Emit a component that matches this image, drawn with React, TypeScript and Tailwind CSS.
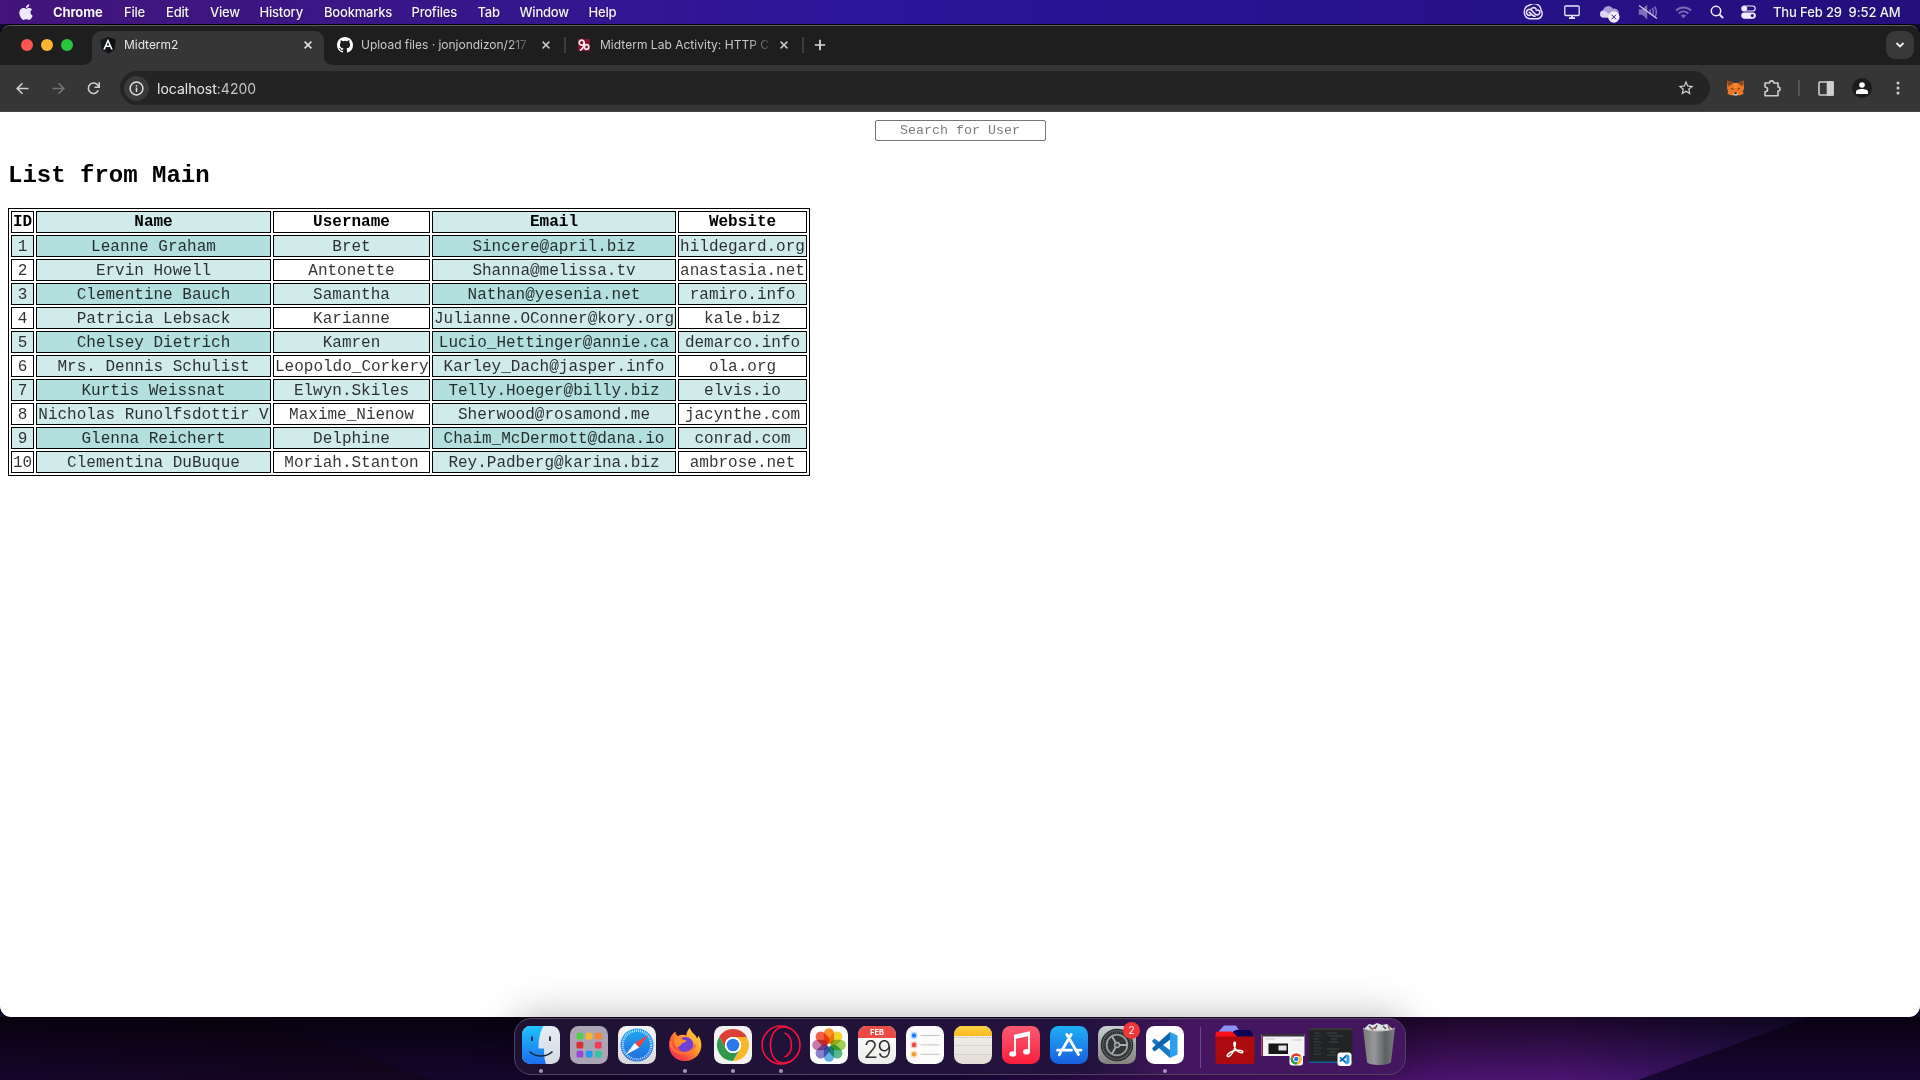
import React from "react";
import type { ReactNode } from "react";

const menus = [
  ["File", "w-[42px]"],
  ["Edit", "w-[44px]"],
  ["View", "w-[49.5px]"],
  ["History", "w-[64.5px]"],
  ["Bookmarks", "w-[87.5px]"],
  ["Profiles", "w-[66px]"],
  ["Tab", "w-[42px]"],
  ["Window", "w-[69px]"],
  ["Help", "w-[40px]"],
];

const users = [
  ["1", "Leanne Graham", "Bret", "Sincere@april.biz", "hildegard.org"],
  ["2", "Ervin Howell", "Antonette", "Shanna@melissa.tv", "anastasia.net"],
  ["3", "Clementine Bauch", "Samantha", "Nathan@yesenia.net", "ramiro.info"],
  ["4", "Patricia Lebsack", "Karianne", "Julianne.OConner@kory.org", "kale.biz"],
  ["5", "Chelsey Dietrich", "Kamren", "Lucio_Hettinger@annie.ca", "demarco.info"],
  ["6", "Mrs. Dennis Schulist", "Leopoldo_Corkery", "Karley_Dach@jasper.info", "ola.org"],
  ["7", "Kurtis Weissnat", "Elwyn.Skiles", "Telly.Hoeger@billy.biz", "elvis.io"],
  ["8", "Nicholas Runolfsdottir V", "Maxime_Nienow", "Sherwood@rosamond.me", "jacynthe.com"],
  ["9", "Glenna Reichert", "Delphine", "Chaim_McDermott@dana.io", "conrad.com"],
  ["10", "Clementina DuBuque", "Moriah.Stanton", "Rey.Padberg@karina.biz", "ambrose.net"],
];

/* ---------- menu bar ---------- */

function MenuBar() {
  return (
    <header className="flex h-6 items-center bg-linear-to-r from-[#43147a] via-[#2b159b] via-45% to-[#230f7c] text-[13px] leading-6 text-white/95 [text-shadow:0_1px_2px_rgba(0,0,0,0.35)]">
      <svg className="ml-[19px] mr-[20px] h-[17px] w-[14px] shrink-0 -translate-y-px" viewBox="0 0 384 480" fill="#eee8fa">
        <path d="M318.700 268.700c-.2-36.700 16.400-64.400 50-84.800-18.800-26.900-47.200-41.700-84.700-44.600-35.500-2.800-74.300 20.700-88.500 20.700-15 0-49.400-19.700-76.400-19.700C63.300 141.200 4 184.800 4 273.500q0 39.300 14.400 81.200c12.800 36.700 59 126.700 107.200 125.200 25.200-.6 43-17.900 75.800-17.900 31.800 0 48.300 17.900 76.400 17.900 48.600-.7 90.400-82.500 102.600-119.300-65.200-30.700-61.700-90-61.700-91.900zM262.100 104.500c27.300-32.400 24.800-61.900 24-72.500-24.100 1.400-52 16.400-67.900 34.900-17.500 19.800-27.800 44.300-25.600 71.900 26.100 2 49.900-11.400 69.500-34.300z" />
      </svg>
      <span className="mr-5 w-[51px] whitespace-nowrap font-bold tracking-[-0.12px]">Chrome</span>
      <nav className="flex font-medium tracking-[-0.2px]">
        {menus.map(([m, width]) => (
          <span key={m} className={width}>{m}</span>
        ))}
      </nav>
      <div className="ml-auto flex items-center">
        <svg className="h-4 w-5" viewBox="0 0 20 16" fill="none" stroke="#ece6fa" strokeWidth="1.400">
          <path d="M6.500 1.200a7 7 0 0 0 0 13.600h7.300a5.300 5.300 0 0 0 4.200-8.600A7 7 0 0 0 6.500 1.200z" />
          <path d="m8.600 10.300-1 .8A3 3 0 1 1 8 5.800l4.300 4.300c2.500 2 5.300-.3 4.300-2.700-1-1.900-3-1.600-4-.7M5.800 7.800l4 3.500c.8.700 1.800 1 2.800 1M8 5.500C9 3 12 3 13.300 5.200" strokeWidth="1.600" />
        </svg>
        <svg className="ml-[21px] h-[14px] w-4" viewBox="0 0 16 14" fill="none" stroke="#ece6fa" strokeWidth="1.300">
          <rect x=".8" y="1" width="14.400" height="9.500" rx="1" />
          <path d="M5 13.200h6M8 11v2" strokeWidth="1.800" />
        </svg>
        <svg className="ml-[19px] h-[18px] w-[21px] translate-y-[2px]" viewBox="0 0 21 18">
          <path d="M4 12.500a3.700 3.700 0 0 1 0-7.300A5.500 5.500 0 0 1 14 3.700a4.500 4.500 0 0 1 2.500 8.800z" fill="#a89bd6" />
          <path d="M3.500 12.500a3.500 3.500 0 0 1 1-6.800c2 0 3 1 4 2l5 4.800z" fill="#ddd6f2" />
          <circle cx="14.800" cy="12" r="5.700" fill="#f3f0fb" />
          <path d="m12.500 9.700 4.600 4.600m0-4.600-4.600 4.600" stroke="#2a1686" strokeWidth="1" />
        </svg>
        <svg className="ml-[18px] h-4 w-5" viewBox="0 0 20 16" fill="none" stroke="#7d6fb9" strokeWidth="1.500">
          <path d="M1.500 6h3l4-3.700v11.400L4.500 10h-3z" fill="#7d6fb9" />
          <path d="M11.500 5.500c1 1.500 1 3.500 0 5M14 4c1.800 2.400 1.800 5.600 0 8M16.400 2.500c2.400 3.300 2.400 7.700 0 11" />
          <path d="m1 1.500 18 13" stroke="#d5cdec" strokeWidth="1.200" />
        </svg>
        <svg className="ml-[17px] h-[13px] w-[17px]" viewBox="0 0 17 13" fill="none" stroke="#7869b6" strokeWidth="2">
          <path d="M1 4.500c4.300-4 10.700-4 15 0M3.700 7.400c2.800-2.500 6.800-2.500 9.600 0" />
          <path d="M6 9.600c1.500-1.200 3.500-1.200 5 0L8.500 12z" fill="#7869b6" strokeWidth=".5" />
        </svg>
        <svg className="ml-[18px] h-[14px] w-[14px]" viewBox="0 0 14 14" fill="none" stroke="#f0ecfb" strokeWidth="1.500">
          <circle cx="6" cy="6" r="4.700" />
          <path d="m9.500 9.500 3.700 3.700" strokeWidth="1.800" />
        </svg>
        <svg className="ml-[17px] h-[14px] w-[15px]" viewBox="0 0 15 14" fill="none" stroke="#f0ecfb" strokeWidth="1.200">
          <rect x=".8" y="1" width="13.400" height="5" rx="2.500" />
          <circle cx="3.700" cy="3.500" r="2" fill="#f0ecfb" />
          <rect x=".8" y="8" width="13.400" height="5.200" rx="2.600" fill="#f0ecfb" />
          <circle cx="11.300" cy="10.600" r="1.600" fill="#2a1686" stroke="none" />
        </svg>
        <span className="ml-[17px] mr-[18px] w-[129px] whitespace-pre font-medium tracking-[-0.12px]">Thu Feb 29  9:52 AM</span>
      </div>
    </header>
  );
}

/* ---------- browser chrome ---------- */

function Close({ active = false }: { active?: boolean }) {
  return (
    <svg className="h-2 w-2 shrink-0" viewBox="0 0 8 8" stroke={active ? "#e3e3e3" : "#c7c7c7"} strokeWidth="1.500">
      <path d="m.6.6 6.800 6.800M7.400.6.600 7.400" />
    </svg>
  );
}

function TabStrip() {
  return (
    <div className="flex h-[39px] items-start bg-[#1e1e1e] text-[12px] text-[#c9c9c9]">
      <div className="ml-[21px] mt-[13px] flex gap-2">
        <i className="size-3 rounded-full bg-[#ff5651]" />
        <i className="size-3 rounded-full bg-[#ffb430]" />
        <i className="size-3 rounded-full bg-[#2bc640]" />
      </div>
      <div className="ml-[9px] mt-[5px] flex h-[34px] items-end">
        <svg className="h-2 w-2.5" viewBox="0 0 10 8"><path d="M0 8h10V0c0 5-4 8-10 8" fill="#363636" /></svg>
        <div className="flex h-[34px] w-[232px] items-center rounded-t-[9px] bg-[#363636] pb-[6px] text-[#e6e6e6]">
          <svg className="ml-2 h-[17px] w-4 shrink-0" viewBox="0 0 16 17">
            <path d="m8 0 7.600 2.700-1.200 10.100L8 16.600l-6.400-3.800L.4 2.700z" fill="#15191f" />
            <path d="M8 0v16.600l6.400-3.800L15.600 2.700z" fill="#0c1014" />
            <path d="M8 1.800 3.200 12.500H5l1-2.400h4l1 2.400h1.800zm1.400 6.800H6.600L8 5.300z" fill="#fff" />
          </svg>
          <span className="ml-2 tracking-[-0.05px]">Midterm2</span>
          <span className="ml-auto mr-[12px]"><Close active /></span>
        </div>
        <svg className="h-2 w-2.5" viewBox="0 0 10 8"><path d="M10 8H0V0c0 5 4 8 10 8" fill="#363636" /></svg>
      </div>
      <div className="ml-[3px] flex h-[38px] items-center">
        <svg className="h-4 w-4 shrink-0" viewBox="0 0 16 16" fill="#fff">
          <path d="M8 0C3.580 0 0 3.580 0 8c0 3.540 2.290 6.530 5.470 7.590.4.070.55-.17.55-.38 0-.19-.01-.82-.01-1.490-2.010.37-2.530-.49-2.690-.94-.09-.23-.48-.94-.82-1.130-.28-.15-.68-.52-.01-.53.63-.01 1.080.58 1.230.82.72 1.210 1.870.87 2.330.66.070-.52.28-.87.51-1.070-1.780-.2-3.640-.89-3.640-3.950 0-.87.31-1.590.82-2.150-.08-.2-.36-1.020.08-2.120 0 0 .67-.21 2.200.82a7.500 7.500 0 0 1 4 0c1.530-1.040 2.200-.82 2.200-.82.44 1.100.16 1.920.08 2.120.51.56.82 1.270.82 2.150 0 3.070-1.870 3.750-3.650 3.950.29.25.54.73.54 1.480 0 1.070-.01 1.930-.01 2.200 0 .21.15.46.55.38A8 8 0 0 0 16 8c0-4.420-3.580-8-8-8" />
        </svg>
        <span className="ml-2 w-[169px] whitespace-nowrap tracking-[-0.02px] [mask-image:linear-gradient(to_right,black_88%,transparent_102%)]">Upload files · jonjondizon/217</span>
        <span className="ml-3"><Close /></span>
        <i className="ml-[14px] h-4 w-0.5 bg-[#3d3d3d]" />
        <svg className="ml-[12px] h-3 w-[12px] shrink-0" viewBox="0 0 12 12" fill="none" stroke="#f3e6ea" strokeWidth="1.700">
          <rect width="12" height="12" fill="#861032" stroke="none" />
          <circle cx="3.700" cy="3.700" r="2.500" />
          <path d="M6 3.500c.4 4-.8 6-4 8" />
          <circle cx="8.500" cy="8" r="2.300" />
          <path d="M6.500 4.500v4" />
        </svg>
        <span className="ml-[10px] w-[168px] whitespace-nowrap tracking-[0.02px] [mask-image:linear-gradient(to_right,black_88%,transparent_104%)]">Midterm Lab Activity: HTTP C</span>
        <span className="ml-3"><Close /></span>
        <i className="ml-[14px] h-4 w-0.5 bg-[#3d3d3d]" />
        <svg className="ml-[10px] h-3 w-3" viewBox="0 0 12 12" stroke="#dcdcdc" strokeWidth="1.700"><path d="M6 .8v10.400M.8 6h10.400" /></svg>
      </div>
      <div className="ml-auto mr-[6px] mt-[5px] flex size-7 items-center justify-center rounded-[9px] bg-[#383838]">
        <svg className="h-2 w-2.5" viewBox="0 0 10 8" fill="none" stroke="#f0f0f0" strokeWidth="1.800"><path d="m1.500 2 3.500 3.500L8.500 2" /></svg>
      </div>
    </div>
  );
}

function Fox() {
  return (
    <svg className="h-4 w-[17px]" viewBox="0 0 17 16">
      <path d="M.5.500 6.500 3h4l6-2.500L17 8l-1 3.500.5 2.500-4 1.500-2-.5h-4l-2 .5-4-1.500.5-2.500L0 8z" fill="#ee7623" />
      <path d="M.5.500 6.500 3l-5 3.500zM16.500.500 10.500 3l5 3.500z" fill="#8f4721" />
      <path d="M6.500 3h4L9.800 8H7.200z" fill="#f58a35" />
      <path d="m3 8.500 3-.5 1 2zm11 0-3-.5-1 2z" fill="#8a3c14" />
      <path d="m6 13.500 1-1h3l1 1-.5 2h-4z" fill="#d9c9bd" />
      <path d="M7 12.500h3l-.5 1.500h-2z" fill="#20140c" />
    </svg>
  );
}

function Toolbar() {
  return (
    <div className="flex h-[47px] items-center border-b border-[#444] bg-[#363636]">
      <svg className="ml-[16px] size-[13px]" viewBox="0 0 13 13" fill="none" stroke="#d0d0d0" strokeWidth="1.600"><path d="M12.500 6.500H1.500M6.500 1.200 1.200 6.500l5.300 5.300" /></svg>
      <svg className="ml-[23px] size-[13px]" viewBox="0 0 13 13" fill="none" stroke="#757575" strokeWidth="1.600"><path d="M.5 6.500h11M6.500 1.200l5.300 5.300-5.300 5.300" /></svg>
      <svg className="ml-[22px] size-[13px]" viewBox="0 0 13 13" fill="none" stroke="#d0d0d0" strokeWidth="1.600"><path d="M11.300 8.300a5.200 5.200 0 1 1-.7-5.300L12 4.600" /><path d="M12.200.2v5H7.500" /></svg>
      <div className="ml-[20px] flex h-[34px] w-[1590px] items-center rounded-full bg-[#242424] pl-[4px] pr-[15px]">
        <span className="flex size-[25px] items-center justify-center rounded-full bg-[#3a3a3a]">
          <svg className="size-[15px]" viewBox="0 0 15 15" fill="none" stroke="#dedede" strokeWidth="1.500"><circle cx="7.500" cy="7.500" r="6.400" /><path d="M7.500 6.500V11M7.500 4v1.500" /></svg>
        </span>
        <span className="ml-2 text-[14px] text-[#e8e8e8]">localhost<span className="text-[#c4c4c4]">:4200</span></span>
        <svg className="ml-auto size-[18px]" viewBox="0 0 24 24" fill="#d2d2d2"><path d="m22 9.240-7.190-.62L12 2 9.190 8.630 2 9.240l5.460 4.730L5.820 21 12 17.270 18.180 21l-1.630-7.030zM12 15.400l-3.760 2.270 1-4.280-3.320-2.880 4.380-.38L12 6.100l1.710 4.040 4.380.38-3.320 2.880 1 4.280z" /></svg>
      </div>
      <div className="ml-[17px] flex items-center">
        <Fox />
        <svg className="ml-5 h-[17px] w-[17px]" viewBox="0 0 17 17" fill="none" stroke="#cfcfcf" strokeWidth="1.600" strokeLinejoin="round">
          <path d="M1 3h4.500c0-2.800 4.200-2.800 4.200 0H14v4c2.700 0 2.700 4 0 4v4.800H1v-4c3.500-.5 3.500-4.300 0-4.800z" />
        </svg>
        <i className="ml-[17px] h-4 w-0.5 bg-[#555]" />
        <svg className="ml-[18px] h-[15px] w-4" viewBox="0 0 16 15" fill="none" stroke="#cfcfcf" strokeWidth="1.600">
          <rect x="1" y="1" width="14" height="13" rx="1" /><path d="M9.500 1H15v13H9.500z" fill="#cfcfcf" />
        </svg>
        <span className="ml-[18px] flex size-5 items-center justify-center rounded-full bg-[#1c1c1c]">
          <svg className="size-3" viewBox="0 0 12 12" fill="#fff"><circle cx="6" cy="3" r="2.800" /><path d="M0 12V9.800C0 6 12 6 12 9.800V12z" /></svg>
        </span>
        <svg className="ml-6 h-[14px] w-1" viewBox="0 0 4 14" fill="#d0d0d0"><circle cx="2" cy="2" r="1.500" /><circle cx="2" cy="7" r="1.500" /><circle cx="2" cy="12" r="1.500" /></svg>
      </div>
    </div>
  );
}

/* ---------- page ---------- */

const cell = "h-[22px] border border-black px-px text-center leading-[18px]";

function Page() {
  return (
    <main className="flex flex-1 flex-col items-start bg-white px-2 pt-2 font-['Liberation_Mono','Courier_New',monospace] text-black">
      <input
        className="h-[21px] w-[171px] self-center rounded-[2px] border border-[#767676] text-center font-['Liberation_Mono',monospace] text-[13.333px] placeholder:text-[#7d7d7d]"
        placeholder="Search for User"
      />
      <h2 className="mt-[21px] h-[27px] text-[24px] font-bold leading-[27px]">List from Main</h2>
      <table className="mt-[19px] w-[802px] table-fixed border-separate border-spacing-[2px] border border-black text-[16px]">
        <colgroup>
          <col className="w-[23px]" />
          <col className="w-[235px]" />
          <col className="w-[157px]" />
          <col className="w-[244px]" />
          <col className="w-[129px]" />
        </colgroup>
        <thead>
          <tr>
            {["ID", "Name", "Username", "Email", "Website"].map((h) => (
              <th key={h} className={cell + " py-px font-bold even:bg-[#d1ebea]"}>{h}</th>
            ))}
          </tr>
        </thead>
        <tbody>
          {users.map((row) => (
            <tr key={row[0]} className="group">
              {row.map((v) => (
                <td key={v} className={cell + " pb-0 pt-[2px] whitespace-nowrap text-black/80 even:bg-[#d1ebea] group-odd:bg-[#d1ebea] group-odd:even:bg-[#b3dfde]"}>{v}</td>
              ))}
            </tr>
          ))}
        </tbody>
      </table>
    </main>
  );
}

/* ---------- dock ---------- */

function Slot({ children, running = false }: { children: ReactNode; running?: boolean }) {
  return (
    <div className="relative flex h-[57px] w-12 shrink-0 flex-col items-center pt-[6px]">
      {children}
      {running && <i className="mt-[4px] size-1 shrink-0 rounded-full bg-[#a794bd]" />}
    </div>
  );
}

function Art({ children }: { children: ReactNode }) {
  return <svg className="size-10 shrink-0" viewBox="-1 -1 40 40">{children}</svg>;
}

function Grad({ id, a, b }: { id: string; a: string; b: string }) {
  return (
    <linearGradient id={id} x1="0" y1="0" x2="0" y2="1">
      <stop offset="0" stopColor={a} />
      <stop offset="1" stopColor={b} />
    </linearGradient>
  );
}

function ChromeMark() {
  return (
    <g>
      <circle r="16" fill="#fff" />
      <path d="M-13.860-8A16 16 0 0 1 13.860-8H0A8 8 0 0 0-6.930 4z" fill="#dd4034" />
      <path d="M13.860-8A16 16 0 0 1 0 16L6.930 4A8 8 0 0 0 0-8z" fill="#fbb72c" />
      <path d="M0 16A16 16 0 0 1-13.860-8L-6.930 4A8 8 0 0 0 6.930 4z" fill="#2f9a4c" />
      <circle r="8" fill="#fff" />
      <circle r="6.300" fill="#2b78e8" />
    </g>
  );
}

function CodeMark() {
  return (
    <g>
      <path d="M18.500 0 26 3.500v19L18.500 26z" fill="#2f9fec" />
      <path d="M1.200 8.200 3 6.500 18.500 18.300V26L.8 10z" fill="#1878c0" />
      <path d="M1.200 17.800 3 19.500 18.500 7.700V0L.8 16z" fill="#0f66b0" />
    </g>
  );
}

const petals = [
  ["#f9922a", "rotate(0)"], ["#f3d530", "rotate(45)"], ["#9fce52", "rotate(90)"], ["#58b98a", "rotate(135)"],
  ["#5fb0e6", "rotate(180)"], ["#8d7fc8", "rotate(225)"], ["#c978ad", "rotate(270)"], ["#f3604a", "rotate(315)"],
];

const pads = [
  ["#4fd04b", "#f8b82c", "#f7852a"],
  ["#d8302e", "#a2a8ae", "#f23d5a"],
  ["#9b45d8", "#1d9bf0", "#36c5a0"],
];

function Dock() {
  return (
    <div className="relative z-10 mt-[1px] flex h-[57px] w-[892px] rounded-[17px] border border-[#51435f] bg-linear-to-r from-[#1e1232] from-0% via-[#23123f] via-65% to-[#44165f] to-75% pl-[2px] shadow-[0_0_40px_rgba(0,0,0,0.3)]">
      <Slot running>
        <Art>
          <Grad id="fa" a="#1fc3fb" b="#1c6df0" />
          <Grad id="fb" a="#e6ecf4" b="#d5dbe4" />
          <rect width="38" height="38" rx="8.500" fill="url(#fb)" />
          <path d="M21.500 0H8.500A8.500 8.500 0 0 0 0 8.500v21A8.500 8.500 0 0 0 8.500 38H24c-1.500-4-2-9-2-15.500h-5.500C16.500 12 18.500 5 21.500 0" fill="url(#fa)" />
          <path d="M10 10.500v4.500M28 10.500v4.500" stroke="#16283e" strokeWidth="1.800" />
          <path d="M7.500 25.500c6 6 17 6 23 0" fill="none" stroke="#16283e" strokeWidth="1.500" />
        </Art>
      </Slot>
      <Slot>
        <Art>
          <rect width="38" height="38" rx="8.500" fill="#aaa4b4" />
          {pads.map((r, y) => r.map((c, x) => <rect key={c} x={6.500 + x * 9.200} y={6.800 + y * 9} width="6.800" height="6.600" rx="1.500" fill={c} />))}
        </Art>
      </Slot>
      <Slot>
        <Art>
          <Grad id="sa" a="#f5f5f5" b="#d9d9dc" />
          <Grad id="sb" a="#22a7f2" b="#1f6bdc" />
          <rect width="38" height="38" rx="8.500" fill="url(#sa)" />
          <circle cx="19" cy="19" r="16.500" fill="url(#sb)" />
          <circle cx="19" cy="19" r="14.300" fill="none" stroke="#d8eefb" strokeWidth="2.400" strokeDasharray=".8 1.200" />
          <path d="m30.500 9-9.300 12.500-4.500-4.600z" fill="#f0443c" />
          <path d="m7.500 29 9.200-12.100 4.500 4.600z" fill="#f6f7fa" />
        </Art>
      </Slot>
      <Slot running>
        <Art>
          <linearGradient id="ff" x1="1" y1="0" x2="0" y2="1">
            <stop offset="0" stopColor="#ffe44a" /><stop offset=".4" stopColor="#ffa02a" /><stop offset=".7" stopColor="#fb4b3c" /><stop offset="1" stopColor="#ed2070" />
          </linearGradient>
          <path d="M24 1.500c-2.500 3-4 5.500-3.500 8-3-1-6-1-8.500.5-2-.6-2.500-2.500-2.500-4.500-3 2-5.500 5.500-6 9.500-2.200 10 4 20 15.500 20C29 35 36 27 35.300 18c-.3-4-1.500-6.500-3.300-8.500 0 1.500-.2 2.300-.8 3C29.500 8 24.500 6.500 24 1.500" fill="url(#ff)" />
          <circle cx="19.500" cy="18.800" r="7.800" fill="#7040d8" />
          <path d="M8 12c4-2 6.500-.5 8.500 1.500 2 .2 3.500.5 4 1.300-1 2.200-5 1.700-5.500 4-2 2-4 3.500-5 2-1.500-3-2-6-2-8.800" fill="#ff8b2c" />
          <path d="M5 15c-1 9 6 13 14 12 6-.5 10-5 10-9" fill="none" stroke="#ff7139" strokeWidth="2.500" />
        </Art>
      </Slot>
      <Slot running>
        <Art>
          <rect width="38" height="38" rx="8.500" fill="#f2f2f2" />
          <g transform="translate(19 19)"><ChromeMark /></g>
        </Art>
      </Slot>
      <Slot running>
        <svg className="size-10 shrink-0 overflow-visible" viewBox="-1 -1 40 40" fill="none" stroke="#f5123f" strokeWidth="1.600">
          <circle cx="19" cy="19" r="19" />
          <path d="M28 2.500C24 .8 20.500.8 18.500 1.400 5 5 5 33 18.500 36.600c2 .6 5.500.6 9.500-1.100" />
          <path d="M22.500 7c9.200 3.500 9.200 20.500 0 24" />
        </svg>
      </Slot>
      <Slot>
        <Art>
          <rect width="38" height="38" rx="8.500" fill="#fbfbfb" />
          <g className="isolate" transform="translate(19 19)">
            {petals.map(([c, t]) => <rect key={c} className="mix-blend-multiply" x="-5.200" y="-16.800" width="10.400" height="15.500" rx="5.200" fill={c} transform={t} />)}
          </g>
        </Art>
      </Slot>
      <Slot>
        <div className="mt-px flex h-[38px] w-[38px] flex-col items-center overflow-hidden rounded-[8.500px] bg-linear-to-b from-white to-[#ececea]">
          <span className="h-3 w-full bg-[#ec4a45] text-center text-[7.500px] font-bold leading-[13px] text-white">FEB</span>
          <span className="text-[24px] font-light leading-[24px] tracking-[-1px] text-[#2e2e2e]">29</span>
        </div>
      </Slot>
      <Slot>
        <Art>
          <rect width="38" height="38" rx="8.500" fill="#fbfbfb" />
          {["#1f7cf2", "#f04a44", "#f29a2c"].map((c, i) => (
            <g key={c} transform={`translate(0 ${9.500 + i * 9.400})`}>
              <circle cx="8" r="3.200" fill="none" stroke={c} strokeOpacity=".5" strokeWidth=".7" />
              <circle cx="8" r="2.300" fill={c} />
              <path d="M14.500 0h19" stroke="#c4c4c6" strokeWidth="1" />
            </g>
          ))}
        </Art>
      </Slot>
      <Slot>
        <Art>
          <Grad id="na" a="#fbd044" b="#fbb91d" />
          <Grad id="nb" a="#f4f2ee" b="#e2ded6" />
          <rect width="38" height="38" rx="8.500" fill="url(#nb)" />
          <path d="M0 10V8.500A8.500 8.500 0 0 1 8.500 0h21A8.500 8.500 0 0 1 38 8.500V10z" fill="url(#na)" />
          <path d="M0 11.500h38" stroke="#aaa59b" strokeWidth=".8" strokeDasharray="1 1.200" />
          <path d="M0 19.500h38M0 28.500h38" stroke="#d3cfc8" strokeWidth=".8" />
        </Art>
      </Slot>
      <Slot>
        <Art>
          <Grad id="ma" a="#fb5a70" b="#f91f3c" />
          <rect width="38" height="38" rx="8.500" fill="url(#ma)" />
          <path d="M13 27.500V9.500l14-3v18.800" fill="none" stroke="#fff" strokeWidth="1.900" />
          <path d="m13 9.500 14-3v3.500l-14 3z" fill="#fff" />
          <ellipse cx="10.700" cy="28" rx="3.500" ry="2.800" fill="#fff" />
          <ellipse cx="24.500" cy="25.800" rx="3.500" ry="2.800" fill="#fff" />
        </Art>
      </Slot>
      <Slot>
        <Art>
          <Grad id="aa" a="#1eb0f5" b="#1a5fe0" />
          <rect width="38" height="38" rx="8.500" fill="url(#aa)" />
          <g stroke="#fff" strokeWidth="2.800" strokeLinecap="round">
            <path d="m16.800 8.500 11.700 20M21.200 8.500 12 24.200M10.500 26.800 9.300 28.800M7.500 24.200h14M27.500 24.200h3.500" />
          </g>
        </Art>
      </Slot>
      <Slot>
        <Art>
          <Grad id="ga" a="#c9d0d3" b="#83827d" />
          <rect width="38" height="38" rx="8.500" fill="url(#ga)" />
          <circle cx="19" cy="19" r="15.500" fill="#6b6e6f" stroke="#2b2e30" strokeWidth="1.500" />
          <circle cx="19" cy="19" r="12.600" fill="#5c5f60" stroke="#2a2c2e" strokeWidth="2.800" strokeDasharray="1.600 .5" />
          <circle cx="19" cy="19" r="10.300" fill="#34373a" stroke="#9fa3a4" strokeWidth="1.600" />
          <path d="M19 19h10M19 19l-5-8.700M19 19l-5 8.700" stroke="#a9adae" strokeWidth="1.800" />
          <circle cx="19" cy="19" r="2.500" fill="#4a4d4f" stroke="#a9adae" strokeWidth="1.300" />
        </Art>
        <span className="absolute left-[30px] top-[3px] flex size-[17px] items-center justify-center rounded-full bg-[#f23638] text-[10px] text-white">2</span>
      </Slot>
      <Slot running>
        <Art>
          <rect width="38" height="38" rx="8.500" fill="#fff" />
          <g transform="translate(5.500 6)"><CodeMark /></g>
        </Art>
      </Slot>
      <i className="ml-[11px] mt-2 h-[41px] w-px bg-[#6d4787]" />
      <svg className="ml-[14px] mt-[6px] h-[40px] w-[40px] shrink-0" viewBox="0 0 40 40">
        <path d="M4 6 9 .5h12l3.500 6V12H4z" fill="#8c8ff5" />
        <path d="M18 6.500 21 5h14l3 4v5H18z" fill="#0d0453" />
        <path d="M.5 14V9.500c0-2 1-3 3-3H17l5 5v3z" fill="#fb0f19" />
        <path d="M.5 11.500h39V36a3 3 0 0 1-3 3h-33a3 3 0 0 1-3-3z" fill="#ab0b0f" />
        <path d="M12.500 31.500c-1.800-1.300 2.500-4.500 5.500-5.500s9-1.200 9.800.6c.7 2-3.800 1-6-1-1.800-1.700-4-6.500-2.500-8.300 1.800-1 1.200 4-.3 7.700-1.500 3.600-4.800 7.500-6.500 6.500z" fill="none" stroke="#fff" strokeWidth="1.400" />
      </svg>
      <svg className="ml-[6px] mt-[15px] h-[32px] w-[44px] shrink-0" viewBox="0 0 44 32">
        <path d="M.5 0h43v22H.5z" fill="#f4f4f4" />
        <path d="M.5 0h43v2.500H.5z" fill="#353238" />
        <path d="M.5 2.500H2V22H.500z" fill="#8b2341" />
        <path d="M4 5h10M32 6h9" stroke="#c9c9cc" />
        <path d="M7.500 9.500H27V20H7.500z" fill="#171718" />
        <path d="M17.500 11.500h8v5h-8z" fill="#dfe2e6" />
        <rect x="28.500" y="18.500" width="13.500" height="13" rx="3" fill="#fff" />
        <g transform="translate(35.250 25) scale(.36)"><ChromeMark /></g>
      </svg>
      <svg className="ml-[4px] mt-[8px] h-[39px] w-[44px] shrink-0" viewBox="0 0 44 39">
        <path d="M0 1h43.500v35H0z" fill="#222324" />
        <path d="M0 1h43.500v2H0z" fill="#38383a" />
        <path d="M0 34.500h43.500V36H0z" fill="#145f9c" />
        <path d="M5 6h6M5 9h8M5 12h5M5 15h7M5 18h6M5 21h8M5 24h6M5 27h7" stroke="#3a3d3e" />
        <path d="M18 6h10M20 9h14M22 12h6M20 15h9M18 22h12M20 25h8M18 28h9" stroke="#3d4a48" />
        <rect x="28.500" y="25.500" width="14" height="13.500" rx="3" fill="#fff" />
        <g transform="translate(30.300 27.300) scale(.39)"><CodeMark /></g>
      </svg>
      <svg className="ml-[9px] mt-[3px] h-[44px] w-[34px] shrink-0" viewBox="0 0 34 44">
        <linearGradient id="tr"><stop offset="0" stopColor="#77797a" /><stop offset=".35" stopColor="#959798" /><stop offset=".7" stopColor="#5e6062" /><stop offset="1" stopColor="#7c7d80" /></linearGradient>
        <path d="M3 6 7 2l4 1 4-2 5 2 5-1 3 3 3 2-1 4H3z" fill="#e1e3e5" />
        <path d="m7 4 3 3m5-4-2 4m8-3 3 3" stroke="#4d5a68" strokeWidth="1.600" />
        <path d="m10 8 3-3M26 4l2 4" stroke="#a86d42" strokeWidth="1.500" />
        <path d="M1 6c6 4 26 4 32 0l-4 34c-1 4-23 4-24 0z" fill="url(#tr)" />
        <path d="M1 6c6 4 26 4 32 0" fill="none" stroke="#b9bbbd" strokeWidth="1" />
      </svg>
    </div>
  );
}

function Wallpaper() {
  return (
    <svg className="absolute inset-0 h-full w-full" viewBox="0 0 1920 63" preserveAspectRatio="none">
      <defs>
        <linearGradient id="wa"><stop offset="0" stopColor="#16062c" /><stop offset="1" stopColor="#13051d" /></linearGradient>
        <linearGradient id="wb"><stop offset="0" stopColor="#130629" /><stop offset=".45" stopColor="#190838" /><stop offset=".64" stopColor="#4b1167" /><stop offset=".84" stopColor="#4c1472" /><stop offset="1" stopColor="#231155" /></linearGradient>
        <linearGradient id="ws" x1="0" y1="0" x2="0" y2="1"><stop offset="0" stopColor="#000" stopOpacity=".65" /><stop offset="1" stopColor="#000" stopOpacity="0" /></linearGradient>
      </defs>
      <path d="M0 0h433v63H0z" fill="url(#wa)" />
      <path d="M250 0h1560l-170 63H433z" fill="url(#wb)" />
      <path d="M1810 0h110v63h-282z" fill="#190634" />
      <path d="M0 0h1920v63H0z" fill="url(#ws)" />
    </svg>
  );
}

export default function App() {
  return (
    <div className="flex h-[1080px] w-[1920px] flex-col overflow-hidden bg-[#13082d] font-['Inter',sans-serif]">
      <MenuBar />
      <section className="mt-px flex h-[992px] flex-col overflow-hidden rounded-[11px] border-t border-[#616161] shadow-[0_0_0_1px_#000]">
        <TabStrip />
        <Toolbar />
        <Page />
      </section>
      <div className="relative flex h-[63px] justify-center">
        <Wallpaper />
        <Dock />
      </div>
    </div>
  );
}
